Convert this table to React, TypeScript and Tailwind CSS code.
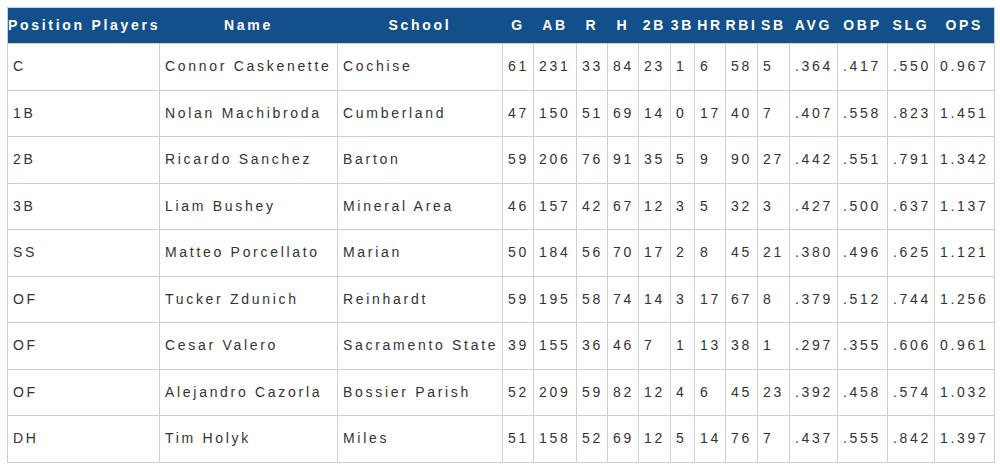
import React from 'react';

interface Player {
    pos: string;
    name: string;
    school: string;
    stats: string[];
}

const headers = ['G', 'AB', 'R', 'H', '2B', '3B', 'HR', 'RBI', 'SB', 'AVG', 'OBP', 'SLG', 'OPS'];

const colWidths = [152, 178, 165, 31, 43, 31, 31, 32, 24, 31, 32, 32, 48, 50, 47, 60];

const players: Player[] = [
    { pos: 'C', name: 'Connor Caskenette', school: 'Cochise', stats: ['61', '231', '33', '84', '23', '1', '6', '58', '5', '.364', '.417', '.550', '0.967'] },
    { pos: '1B', name: 'Nolan Machibroda', school: 'Cumberland', stats: ['47', '150', '51', '69', '14', '0', '17', '40', '7', '.407', '.558', '.823', '1.451'] },
    { pos: '2B', name: 'Ricardo Sanchez', school: 'Barton', stats: ['59', '206', '76', '91', '35', '5', '9', '90', '27', '.442', '.551', '.791', '1.342'] },
    { pos: '3B', name: 'Liam Bushey', school: 'Mineral Area', stats: ['46', '157', '42', '67', '12', '3', '5', '32', '3', '.427', '.500', '.637', '1.137'] },
    { pos: 'SS', name: 'Matteo Porcellato', school: 'Marian', stats: ['50', '184', '56', '70', '17', '2', '8', '45', '21', '.380', '.496', '.625', '1.121'] },
    { pos: 'OF', name: 'Tucker Zdunich', school: 'Reinhardt', stats: ['59', '195', '58', '74', '14', '3', '17', '67', '8', '.379', '.512', '.744', '1.256'] },
    { pos: 'OF', name: 'Cesar Valero', school: 'Sacramento State', stats: ['39', '155', '36', '46', '7', '1', '13', '38', '1', '.297', '.355', '.606', '0.961'] },
    { pos: 'OF', name: 'Alejandro Cazorla', school: 'Bossier Parish', stats: ['52', '209', '59', '82', '12', '4', '6', '45', '23', '.392', '.458', '.574', '1.032'] },
    { pos: 'DH', name: 'Tim Holyk', school: 'Miles', stats: ['51', '158', '52', '69', '12', '5', '14', '76', '7', '.437', '.555', '.842', '1.397'] },
];

const cell = 'border border-[#cfcfcf] pl-[5px] pr-0 whitespace-nowrap overflow-hidden align-middle';

const App: React.FC = () => {
    return (
        <div className="bg-white p-[7px] font-['Liberation_Sans',Arial,sans-serif] text-[14px] tracking-[2.7px]">
            <table className="table-fixed border-collapse w-[987px] border border-[#cfcfcf]">
                <colgroup>
                    {colWidths.map((w, i) => (
                        <col key={i} style={{ width: w }} />
                    ))}
                </colgroup>
                <thead>
                    <tr className="h-[36px] bg-[#124f8b] text-white font-bold">
                        <th className="px-0 text-center whitespace-nowrap">Position Players</th>
                        <th className="px-0 text-center">Name</th>
                        <th className="px-0 text-center">School</th>
                        {headers.map(h => (
                            <th key={h} className="px-0 text-center whitespace-nowrap">{h}</th>
                        ))}
                    </tr>
                </thead>
                <tbody className="text-[#333]">
                    {players.map((p, i) => (
                        <tr key={i} className="h-[46.5px]">
                            <td className={cell}>{p.pos}</td>
                            <td className={cell}>{p.name}</td>
                            <td className={cell}>{p.school}</td>
                            {p.stats.map((s, j) => (
                                <td key={j} className={cell}>{s}</td>
                            ))}
                        </tr>
                    ))}
                </tbody>
            </table>
        </div>
    );
};

export default App;
